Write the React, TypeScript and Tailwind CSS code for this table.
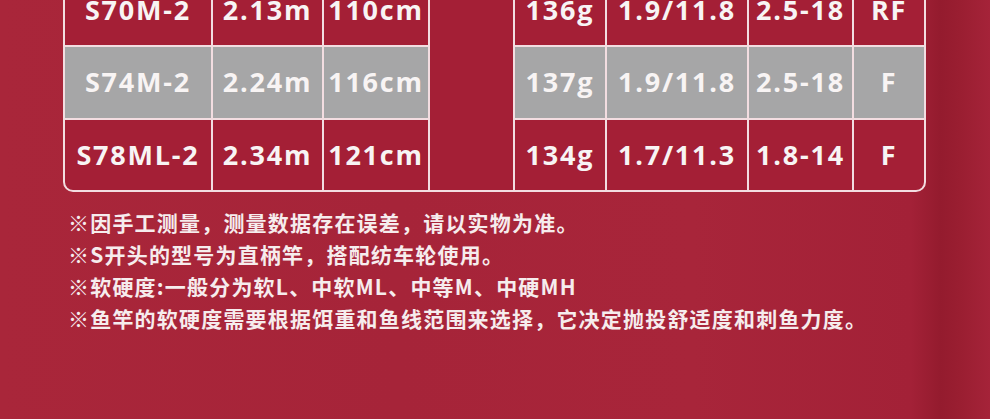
import React from "react";

const rows = [
  { cells: ["S70M-2", "2.13m", "110cm"], right: ["136g", "1.9/11.8", "2.5-18", "RF"], gray: false },
  { cells: ["S74M-2", "2.24m", "116cm"], right: ["137g", "1.9/11.8", "2.5-18", "F"], gray: true },
  { cells: ["S78ML-2", "2.34m", "121cm"], right: ["134g", "1.7/11.3", "1.8-14", "F"], gray: false },
];

const notes = [
  "※因手工测量，测量数据存在误差，请以实物为准。",
  "※S开头的型号为直柄竿，搭配纺车轮使用。",
  "※软硬度:一般分为软L、中软ML、中等M、中硬MH",
  "※鱼竿的软硬度需要根据饵重和鱼线范围来选择，它决定抛投舒适度和刺鱼力度。",
];

function Cell({ text, gray }: { text: string; gray: boolean }) {
  return (
    <div
      className={`flex items-center justify-center text-[27px] font-bold tracking-[1.8px] text-[#f8f4f4] ${
        gray ? "bg-[#a6a6a7]" : "bg-[#a41f36]"
      }`}
    >
      {text}
    </div>
  );
}

export default function App() {
  return (
    <div
      className="w-[990px] h-[419px] overflow-hidden bg-[linear-gradient(90deg,#a9263a_0%,#a62439_40%,#a8253a_70%,#a32137_92%,#941b2e_95%,#9a1e31_97%,#a52339_100%)]"
      style={{ fontFamily: '"Open Sans", "Noto Sans CJK SC", sans-serif' }}
    >
      <div className="ml-[63px] mt-[-27px] w-[863px] rounded-b-[10px] border-2 border-[#f3dde1] bg-[#f3dde1] overflow-hidden">
        <div className="grid grid-cols-[146px_109px_104px_83px_90px_140px_103px_70px] grid-rows-[70px_71px_70px] gap-[2px]">
          {rows.map((r, i) => (
            <React.Fragment key={i}>
              {r.cells.map((c, j) => (
                <Cell key={j} text={c} gray={r.gray} />
              ))}
              {i === 0 && <div className="row-span-3 bg-[#a41f36]" />}
              {r.right.map((c, j) => (
                <Cell key={"r" + j} text={c} gray={r.gray} />
              ))}
            </React.Fragment>
          ))}
        </div>
      </div>
      <div
        className="ml-[68px] mt-[14px] flex flex-col text-[21px] leading-[32px] tracking-[1.2px] font-bold text-[#f6eced]"
        style={{ fontFamily: '"Noto Sans CJK SC", "Noto Sans", sans-serif' }}
      >
        {notes.map((n, i) => (
          <div key={i}>{n}</div>
        ))}
      </div>
    </div>
  );
}
